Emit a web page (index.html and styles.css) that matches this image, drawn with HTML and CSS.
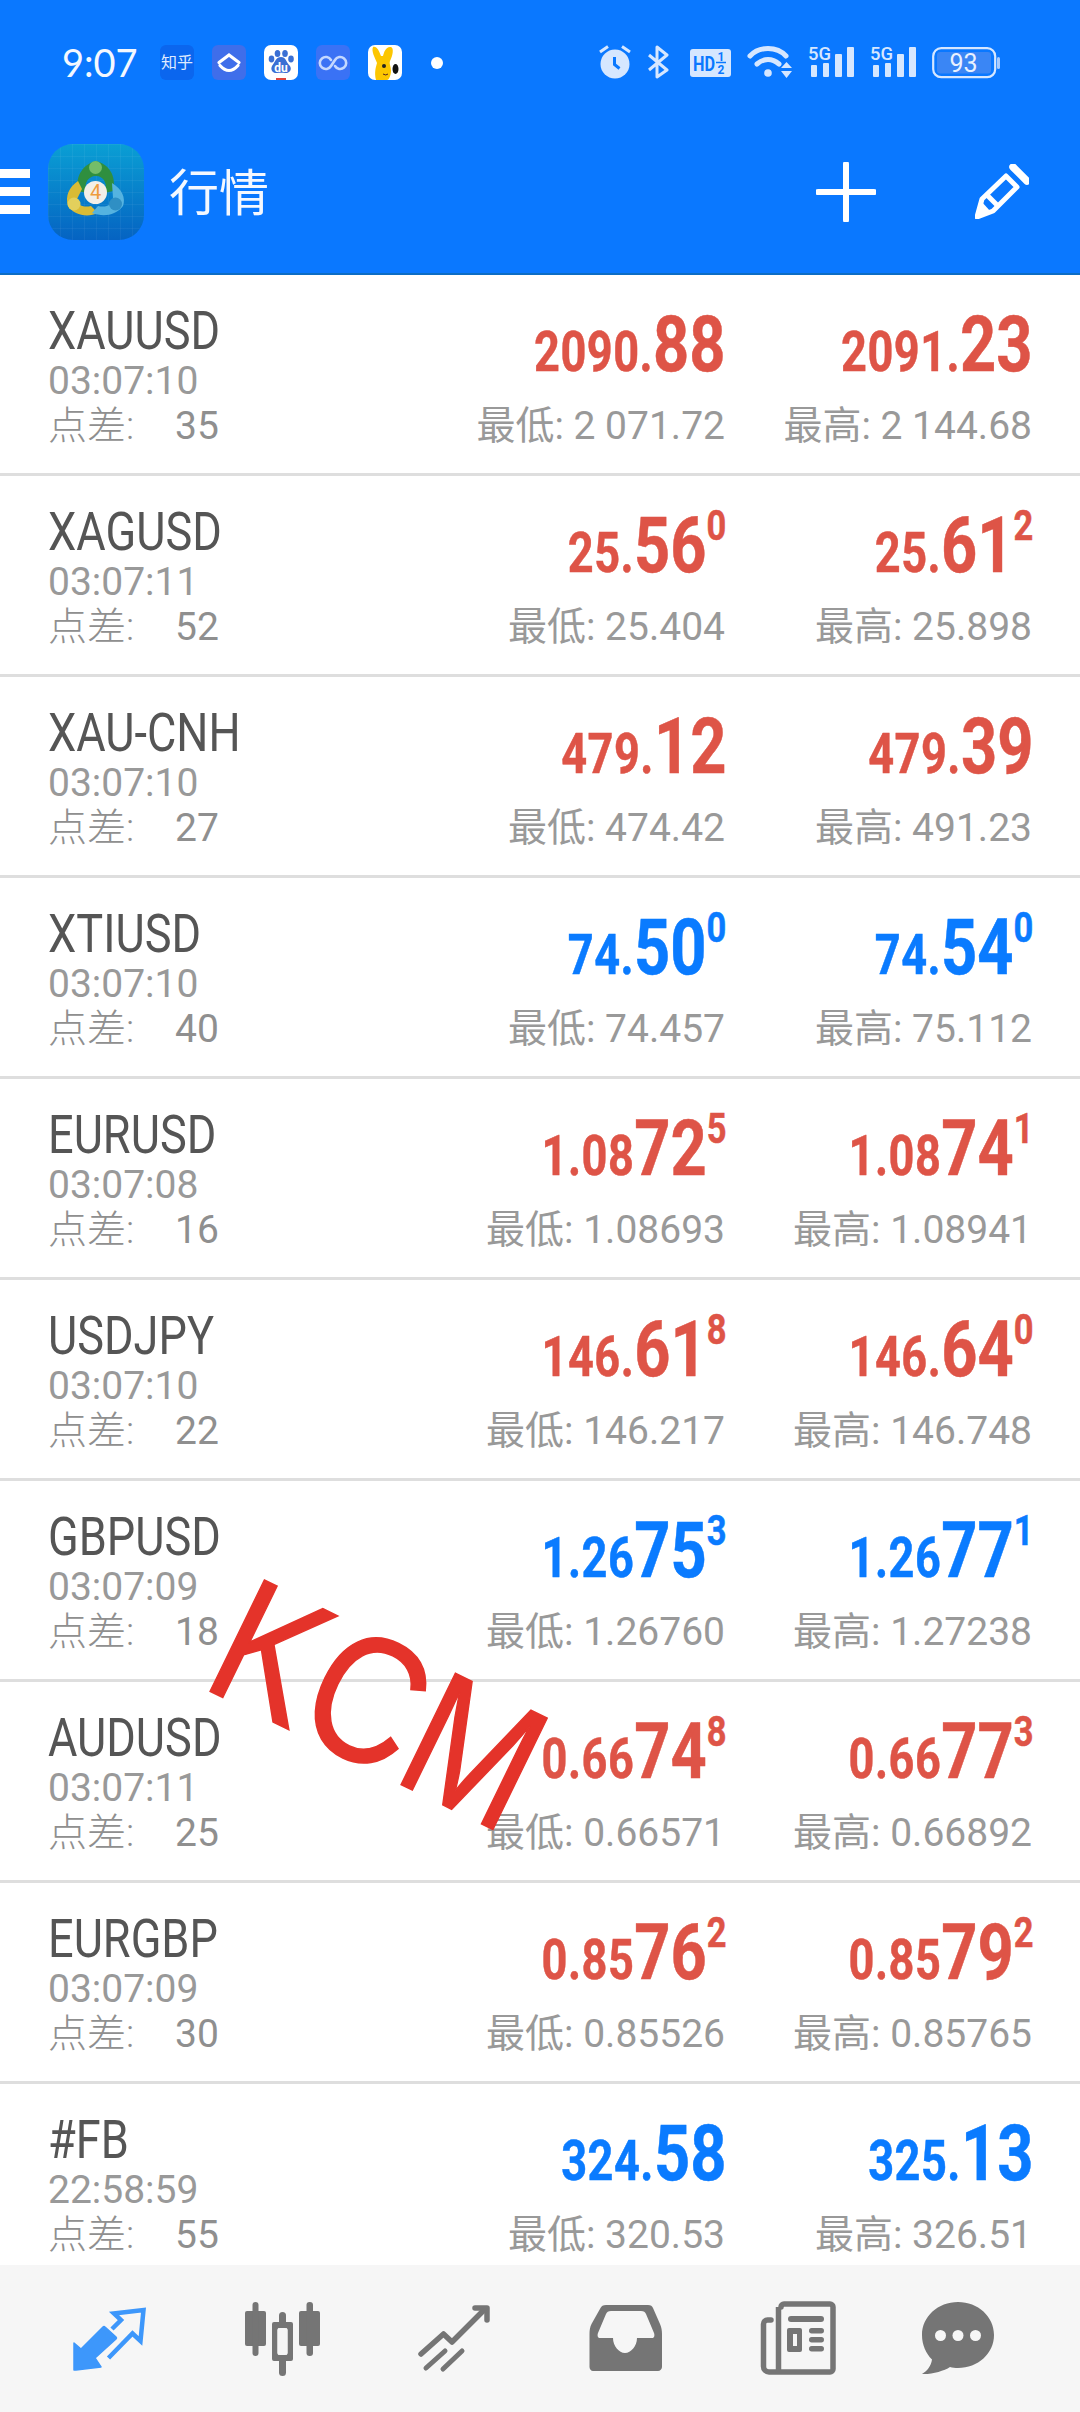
FILE: index.html
```html
<!DOCTYPE html>
<html lang="zh">
<head>
<meta charset="utf-8">
<title>行情</title>
<link rel="stylesheet" href="styles.css">
</head>
<body>
<div class="app">
  <header class="header">
    <div class="status">
      <div class="status-left">
        <span class="clock">9:07</span>
        <span class="mini mini-zhihu">知乎</span>
        <svg class="mini" viewBox="0 0 34 35"><rect width="34" height="35" rx="6" fill="#3f6eea"/><path d="M7 17.5 17 10l10 7.500M8 20.500q9 10 18 0" fill="none" stroke="#fff" stroke-width="3.200" stroke-linecap="round"/></svg>
        <svg class="mini" viewBox="0 0 34 35"><rect width="34" height="35" rx="7" fill="#fff"/><g fill="#3a6fd4"><ellipse cx="7.500" cy="14" rx="2.800" ry="3.400"/><ellipse cx="13.500" cy="8.500" rx="2.800" ry="3.500"/><ellipse cx="21" cy="8.500" rx="2.800" ry="3.500"/><ellipse cx="27" cy="14" rx="2.800" ry="3.400"/><path d="M17 12c5 0 5 5 9 9 2.500 4-1 7.500-5 7-2.500-.5-5.500-.5-8 0-4 .5-7-3-5-7 3-4 4-9 9-9Z"/></g><text x="17" y="27" class="du">du</text><rect x="12" y="33" width="10" height="2" fill="#e0433a"/></svg>
        <svg class="mini" viewBox="0 0 34 35"><rect width="34" height="35" rx="6" fill="#3a72f5"/><path d="M15 15a6 6 0 1 0 0 6l4-6a6 6 0 1 1 0 6" fill="none" stroke="#c4d8ff" stroke-width="2.600" stroke-linecap="round"/></svg>
        <svg class="mini" viewBox="0 0 34 35"><rect width="34" height="35" rx="7" fill="#fff"/><path d="M5 2c4-1 6 4 8 9h2c1-4 3-10 8-9 3 1 2 8-1 14-1 3 1 5 1 10 0 4-2 9-4 9H8c-2-8 0-13 1-17C7 13 3 6 5 2Z" fill="#fcc600"/><ellipse cx="27.500" cy="24" rx="3" ry="5" fill="#111"/><circle cx="16" cy="21" r="2" fill="#222"/><path d="M15 29q3 2 5 0" fill="none" stroke="#522" stroke-width="1"/></svg>
        <span class="dot"></span>
      </div>
      <div class="status-right">
        <svg class="st-alarm" viewBox="0 0 32 34"><circle cx="16" cy="19" r="14.500" fill="#d6e7ff"/><path d="M1 7 9 1.500M31 7 23 1.500" stroke="#d6e7ff" stroke-width="3" fill="none"/><path d="M15.500 12v7.500l5 4" stroke="#0a78ff" stroke-width="3" fill="none"/></svg>
        <svg class="st-bt" viewBox="0 0 27 34"><path d="M2 10 20 25 10 32V2L20 10 2 25" fill="none" stroke="#d6e7ff" stroke-width="3" stroke-linejoin="round"/></svg>
        <svg class="st-hd" viewBox="0 0 41 28"><rect width="41" height="28" rx="3" fill="#d6e7ff"/><text x="3" y="22" class="hd-text" textLength="22" lengthAdjust="spacingAndGlyphs">HD</text><text x="31" y="12" class="hd-frac">1</text><text x="31" y="25" class="hd-frac">2</text><path d="M26 13.500h10" stroke="#0a78ff" stroke-width="1.500"/></svg>
        <svg class="st-wifi" viewBox="0 0 45 34"><g fill="none" stroke="#d6e7ff" stroke-width="5" stroke-linecap="round"><path d="M3 11C12 1 30 1 39 11"/><path d="M10 19c7-6 15-6 22 0"/></g><circle cx="21" cy="28" r="3.800" fill="#d6e7ff"/><path d="M34 23h11l-5.500-6ZM34 26h11l-5.500 7Z" fill="#d6e7ff"/></svg>
        <svg class="st-net" viewBox="0 -6 46 39"><text x="0" y="15" class="fiveg" textLength="23" lengthAdjust="spacingAndGlyphs">5G</text><g fill="#d6e7ff"><rect x="3" y="20" width="6" height="12" rx="1"/><rect x="15" y="18" width="6" height="14" rx="1"/><rect x="27" y="9" width="7" height="23" rx="1"/><rect x="39" y="2" width="7" height="30" rx="1"/></g></svg>
        <svg class="st-net" viewBox="0 -6 46 39"><text x="0" y="15" class="fiveg" textLength="23" lengthAdjust="spacingAndGlyphs">5G</text><g fill="#d6e7ff"><rect x="3" y="20" width="6" height="12" rx="1"/><rect x="15" y="18" width="6" height="14" rx="1"/><rect x="27" y="9" width="7" height="23" rx="1"/><rect x="39" y="2" width="7" height="30" rx="1"/></g></svg>
        <svg class="st-bat" viewBox="0 0 68 32"><rect x="1.200" y="1.200" width="62" height="29" rx="8" fill="none" stroke="#d6e7ff" stroke-width="2.200"/><rect x="5" y="5" width="54" height="21.500" rx="3" fill="#3a86f5"/><rect x="65" y="10" width="3" height="12" rx="1.500" fill="#a9ccff"/><text x="31.500" y="24.500" class="bat-text">93</text></svg>
      </div>
    </div>
    <div class="toolbar">
      <div class="burger"><span></span><span></span><span></span></div>
      <svg class="logo" viewBox="0 0 96 96">
        <defs>
          <linearGradient id="lg" x1="0" y1="0" x2="0" y2="1"><stop offset="0" stop-color="#0a9fd4"/><stop offset="1" stop-color="#0563c2"/></linearGradient>
          <pattern id="grid" width="12" height="12" patternUnits="userSpaceOnUse"><path d="M12 0H0V12" fill="none" stroke="#fff" stroke-opacity=".09" stroke-width="1"/></pattern>
        </defs>
        <rect width="96" height="96" rx="25" fill="url(#lg)"/>
        <rect width="96" height="96" rx="25" fill="url(#grid)"/>
        <path d="M30 47C27 31 36 20 48 17c12 3 21 14 17 30l-8 2c3-9-1-17-9-17s-13 8-9 17Z" fill="#2f8f3f"/>
        <path d="M30 37c-9 6-13 15-10 25 6 9 19 12 30 7l-7-7c-8 2-14-1-14-7l5-10Z" fill="#d9bb35"/>
        <path d="M64 39c10 6 14 15 11 23-8 10-20 11-31 7l6-7c8 2 15-1 15-8Z" fill="#55b3e0"/>
        <circle cx="47.500" cy="23.500" r="6.500" fill="#74bd6a"/>
        <circle cx="26" cy="60" r="6.500" fill="#e3d05c"/>
        <circle cx="67.500" cy="60" r="6.500" fill="#2f8fc4"/>
        <circle cx="47.500" cy="48.500" r="11.500" fill="#f3efe8"/>
        <text x="47.500" y="55" class="logo-four">4</text>
      </svg>
      <h1 class="title">行情</h1>
      <svg class="tb-plus" viewBox="0 0 60 60"><path d="M30 2v56M2 30h56" stroke="#fff" stroke-width="6" stroke-linecap="round" fill="none"/></svg>
      <svg class="tb-pencil" viewBox="0 0 54 55"><path d="M38 3 52 17" stroke="#fff" stroke-width="7.500" stroke-linecap="round" fill="none"/><path d="M31 12 42 23 18 47 2 53 7 35Z" fill="none" stroke="#fff" stroke-width="5" stroke-linejoin="round"/><path d="M6 37 16 48 1 54Z" fill="#fff"/><path d="M12 31 23 42" stroke="#fff" stroke-width="5"/></svg>
    </div>
  </header>

  <main class="list">
    <article class="row">
      <div class="info"><div class="sym"><span>XAUUSD</span></div><div class="time">03:07:10</div><div class="spread"><span class="sp-label">点差:</span><span>35</span></div></div>
      <div class="quote red"><div class="price"><span><small>2090.</small><b>88</b></span></div><div class="range">最低: 2 071.72</div></div>
      <div class="quote red"><div class="price"><span><small>2091.</small><b>23</b></span></div><div class="range">最高: 2 144.68</div></div>
    </article>
    <article class="row">
      <div class="info"><div class="sym"><span>XAGUSD</span></div><div class="time">03:07:11</div><div class="spread"><span class="sp-label">点差:</span><span>52</span></div></div>
      <div class="quote red"><div class="price"><span><small>25.</small><b>56</b><i>0</i></span></div><div class="range">最低: 25.404</div></div>
      <div class="quote red"><div class="price"><span><small>25.</small><b>61</b><i>2</i></span></div><div class="range">最高: 25.898</div></div>
    </article>
    <article class="row">
      <div class="info"><div class="sym"><span>XAU-CNH</span></div><div class="time">03:07:10</div><div class="spread"><span class="sp-label">点差:</span><span>27</span></div></div>
      <div class="quote red"><div class="price"><span><small>479.</small><b>12</b></span></div><div class="range">最低: 474.42</div></div>
      <div class="quote red"><div class="price"><span><small>479.</small><b>39</b></span></div><div class="range">最高: 491.23</div></div>
    </article>
    <article class="row">
      <div class="info"><div class="sym"><span>XTIUSD</span></div><div class="time">03:07:10</div><div class="spread"><span class="sp-label">点差:</span><span>40</span></div></div>
      <div class="quote blue"><div class="price"><span><small>74.</small><b>50</b><i>0</i></span></div><div class="range">最低: 74.457</div></div>
      <div class="quote blue"><div class="price"><span><small>74.</small><b>54</b><i>0</i></span></div><div class="range">最高: 75.112</div></div>
    </article>
    <article class="row">
      <div class="info"><div class="sym"><span>EURUSD</span></div><div class="time">03:07:08</div><div class="spread"><span class="sp-label">点差:</span><span>16</span></div></div>
      <div class="quote red"><div class="price"><span><small>1.08</small><b>72</b><i>5</i></span></div><div class="range">最低: 1.08693</div></div>
      <div class="quote red"><div class="price"><span><small>1.08</small><b>74</b><i>1</i></span></div><div class="range">最高: 1.08941</div></div>
    </article>
    <article class="row">
      <div class="info"><div class="sym"><span>USDJPY</span></div><div class="time">03:07:10</div><div class="spread"><span class="sp-label">点差:</span><span>22</span></div></div>
      <div class="quote red"><div class="price"><span><small>146.</small><b>61</b><i>8</i></span></div><div class="range">最低: 146.217</div></div>
      <div class="quote red"><div class="price"><span><small>146.</small><b>64</b><i>0</i></span></div><div class="range">最高: 146.748</div></div>
    </article>
    <article class="row">
      <div class="info"><div class="sym"><span>GBPUSD</span></div><div class="time">03:07:09</div><div class="spread"><span class="sp-label">点差:</span><span>18</span></div></div>
      <div class="quote blue"><div class="price"><span><small>1.26</small><b>75</b><i>3</i></span></div><div class="range">最低: 1.26760</div></div>
      <div class="quote blue"><div class="price"><span><small>1.26</small><b>77</b><i>1</i></span></div><div class="range">最高: 1.27238</div></div>
    </article>
    <article class="row">
      <div class="info"><div class="sym"><span>AUDUSD</span></div><div class="time">03:07:11</div><div class="spread"><span class="sp-label">点差:</span><span>25</span></div></div>
      <div class="quote red"><div class="price"><span><small>0.66</small><b>74</b><i>8</i></span></div><div class="range">最低: 0.66571</div></div>
      <div class="quote red"><div class="price"><span><small>0.66</small><b>77</b><i>3</i></span></div><div class="range">最高: 0.66892</div></div>
    </article>
    <article class="row">
      <div class="info"><div class="sym"><span>EURGBP</span></div><div class="time">03:07:09</div><div class="spread"><span class="sp-label">点差:</span><span>30</span></div></div>
      <div class="quote red"><div class="price"><span><small>0.85</small><b>76</b><i>2</i></span></div><div class="range">最低: 0.85526</div></div>
      <div class="quote red"><div class="price"><span><small>0.85</small><b>79</b><i>2</i></span></div><div class="range">最高: 0.85765</div></div>
    </article>
    <article class="row">
      <div class="info"><div class="sym"><span>#FB</span></div><div class="time">22:58:59</div><div class="spread"><span class="sp-label">点差:</span><span>55</span></div></div>
      <div class="quote blue"><div class="price"><span><small>324.</small><b>58</b></span></div><div class="range">最低: 320.53</div></div>
      <div class="quote blue"><div class="price"><span><small>325.</small><b>13</b></span></div><div class="range">最高: 326.51</div></div>
    </article>
  </main>

  <nav class="nav">
    <div class="nav-item"><svg viewBox="0 0 80 80"><path d="M4 71V44l7 6L33 28q1-1 2 0l11 10q1 1 0 2L25 59l6 9-25 3Z" fill="#3d97fb" stroke="#3d97fb" stroke-width="1.500" stroke-linejoin="round"/><path d="M42 30 51 21 44 14.500 73.500 11 70.500 42 62.500 34.500 38.500 59" fill="none" stroke="#3d97fb" stroke-width="4.500"/></svg></div>
    <div class="nav-item"><svg viewBox="0 0 80 80"><g fill="#757575"><rect x="3" y="12" width="21" height="35" rx="2"/><rect x="10.500" y="3" width="6" height="54" rx="3"/><rect x="57" y="12" width="21" height="35" rx="2"/><rect x="64.500" y="3" width="6.500" height="54" rx="3"/><rect x="37" y="13" width="7" height="64" rx="3.500"/><path fill-rule="evenodd" d="M32 23h17a2 2 0 0 1 2 2v35a2 2 0 0 1-2 2H32a2 2 0 0 1-2-2V25a2 2 0 0 1 2-2Zm5 6h0a2 2 0 0 0-1.500 2v23a2 2 0 0 0 1.500 2h7a2 2 0 0 0 1.500-2V31a2 2 0 0 0-1.500-2Z"/></g><rect x="35.500" y="29" width="10" height="27" rx="2" fill="#f6f6f6"/></svg></div>
    <div class="nav-item"><svg viewBox="0 0 80 80"><g fill="none" stroke="#757575" stroke-width="5.500" stroke-linecap="round" stroke-linejoin="round"><path d="M7 55 29.500 35 38 43 71 10"/><path d="M61 9h12v12"/><path d="M12 69 31 52M29 70 48 52" stroke-width="5"/></g></svg></div>
    <div class="nav-item"><svg viewBox="0 0 80 80"><path fill="#757575" fill-rule="evenodd" d="M20 6h42c3 0 4 1 5 3l7 16c1.500 3 2 7 2 10v33c0 2-2 4-4 4H7c-2 0-3.500-2-3.500-4V35c0-4 .5-7 2-10l9-16c1-2 2.500-3 5.500-3Zm5 6c-3 0-4 1-5 3l-8 19c-1 3 0 5 2 5h13c0 8 6 15 12 15s12-7 12-15h15c2 0 3-2 2-5l-8-19c-1-2-2-3-5-3Z"/></svg></div>
    <div class="nav-item"><svg viewBox="0 0 80 80"><g fill="none" stroke="#757575" stroke-width="5.500"><path d="M23 8a3 3 0 0 1 3-3h46a3 3 0 0 1 3 3v62a3 3 0 0 1-3 3H11a5.500 5.500 0 0 1-5.500-5.500V25a4 4 0 0 1 4-4H13" stroke-linecap="round"/><path d="M20.500 8v65"/></g><g fill="#757575"><rect x="30" y="17" width="36" height="6" rx="3"/><path fill-rule="evenodd" d="M31 29h11a2 2 0 0 1 2 2v20a2 2 0 0 1-2 2H31a2 2 0 0 1-2-2V31a2 2 0 0 1 2-2Zm4 6v12h4V35Z"/><rect x="51" y="29" width="15" height="5.500" rx="2.700"/><rect x="51" y="38" width="15" height="5.500" rx="2.700"/><rect x="51" y="47" width="15" height="5.500" rx="2.700"/></g></svg></div>
    <div class="nav-item"><svg viewBox="0 0 80 80"><path fill="#757575" d="M40 3c20 0 36 14.500 36 33S60 69 40 69c-3 0-5.500-.3-8-1-6 4-18 7.500-28 7 5-3 9-7.500 10-14.500C8 54.500 4 46 4 36 4 17.500 20 3 40 3Z"/><g fill="#f6f6f6"><circle cx="22.500" cy="36.500" r="5.500"/><circle cx="40" cy="36.500" r="5.500"/><circle cx="57.500" cy="36.500" r="5.500"/></g></svg></div>
  </nav>

  <div class="watermark">KCM</div>
</div>
</body>
</html>
```
FILE: styles.css
```css
* { box-sizing: border-box; }
html, body { margin: 0; padding: 0; background: #fff; }
body { font-family: Roboto, "Noto Sans CJK SC", sans-serif; }

.app {
  position: relative;
  width: 1080px;
  height: 2412px;
  display: flex;
  flex-direction: column;
  overflow: hidden;
}

/* Header */
.header {
  flex: none;
  height: 275px;
  background: #0a78ff;
  border-bottom: 2px solid #0d6dc4;
  color: #fff;
}
.status {
  height: 110px;
  padding: 45px 80px 0 62px;
  display: flex;
  justify-content: space-between;
  align-items: flex-start;
}
.status-left { display: flex; align-items: center; gap: 18px; height: 35px; }
.clock { font-size: 38px; font-weight: 400; width: 80px; line-height: 35px; color: #f4f8ff; font-family: Lato, Roboto, sans-serif; }
.mini { width: 34px; height: 35px; display: block; flex: none; }
.mini-zhihu {
  background: #0b66ee;
  border-radius: 6px;
  color: #dfeaff;
  font-size: 16px;
  line-height: 35px;
  text-align: center;
  white-space: nowrap;
}
.du { font: 700 12px Roboto, sans-serif; fill: #fff; text-anchor: middle; }
.dot { width: 12px; height: 12px; border-radius: 50%; background: #fff; margin-left: 11px; }

.status-right { display: flex; align-items: flex-start; gap: 16px; }
.status-right svg { display: block; flex: none; }
.st-alarm { width: 32px; height: 34px; }
.st-bt { width: 27px; height: 34px; }
.st-hd { width: 41px; height: 28px; margin-top: 4px; }
.st-wifi { width: 45px; height: 34px; }
.st-net { width: 46px; height: 39px; margin-top: -6px; }
.st-bat { width: 68px; height: 32px; margin-top: 2px; }
.hd-text { font: 700 20px Roboto, sans-serif; fill: #0a78ff; }
.hd-frac { font: 700 12px Roboto, sans-serif; fill: #0a78ff; text-anchor: middle; }
.fiveg { font: 500 18px Roboto, sans-serif; fill: #d6e7ff; }
.bat-text { font: 400 25px Roboto, sans-serif; fill: #e8f1ff; text-anchor: middle; }

.toolbar { height: 163px; display: flex; align-items: center; }
.burger { width: 30px; display: flex; flex-direction: column; gap: 9px; flex: none; }
.burger span { display: block; height: 9px; background: #fff; }
.logo { width: 96px; height: 96px; margin-left: 18px; flex: none; }
.logo-four { font: 400 20px Roboto, sans-serif; fill: #ee9c3e; text-anchor: middle; }
.title {
  margin: 5px 0 0 25px;
  flex: 1;
  font-size: 50px;
  font-weight: 400;
  line-height: 60px;
  color: #f4f8ff;
}
.tb-plus { width: 60px; height: 60px; flex: none; margin-right: 99px; }
.tb-pencil { width: 54px; height: 55px; flex: none; margin-right: 51px; }

/* List */
.list { flex: 1; min-height: 0; overflow: hidden; }
.row {
  height: 201px;
  padding: 0 48px 0 48px;
  display: grid;
  grid-template-columns: 1fr 307px 307px;
  border-bottom: 3px solid #dedede;
}
.info { padding-top: 28px; }
.sym { height: 57px; line-height: 56px; font-size: 54px; color: #555; white-space: nowrap; }
.sym span { display: inline-block; transform: scaleX(.835); transform-origin: left center; }
.time { height: 43px; line-height: 42px; font-size: 39px; color: #999; }
.spread { height: 46px; line-height: 46px; font-size: 39px; color: #8f8f8f; display: flex; white-space: nowrap; }
.sp-label { width: 127px; font-weight: 300; }

.quote { text-align: right; padding-top: 20px; }
.price { height: 100px; line-height: 100px; white-space: nowrap; font-weight: 700; margin-right: -1px; }
.price span { display: inline-block; transform: scaleX(.82); transform-origin: right center; -webkit-text-stroke: .5px currentColor; }
.price small { font-size: 55px; letter-spacing: .6px; }
.price b { font-size: 77px; font-weight: 700; }
.price i { font-size: 42px; font-style: normal; font-weight: 700; vertical-align: 32px; line-height: 0; }
.red { color: #de5447; }
.blue { color: #0a7bff; }
.range { height: 46px; line-height: 46px; margin-top: 8px; font-size: 39px; color: #999; white-space: nowrap; }

/* Bottom nav */
.nav {
  flex: none;
  height: 147px;
  background: #f6f6f6;
  padding-left: 24px;
  display: grid;
  grid-template-columns: repeat(5, 172px) 148px;
  align-items: center;
  justify-items: center;
}
.nav-item { width: 80px; height: 80px; }
.nav-item svg { display: block; width: 80px; height: 80px; }

/* Hand-written overlay stamp */
.watermark {
  position: absolute;
  left: 226px;
  top: 1540px;
  font-family: "Liberation Sans", sans-serif;
  font-size: 180px;
  line-height: 180px;
  color: #e4332a;
  -webkit-text-stroke: 1.5px #e4332a;
  white-space: nowrap;
  transform: rotate(26deg) scaleX(.85);
  transform-origin: left center;
}
```
